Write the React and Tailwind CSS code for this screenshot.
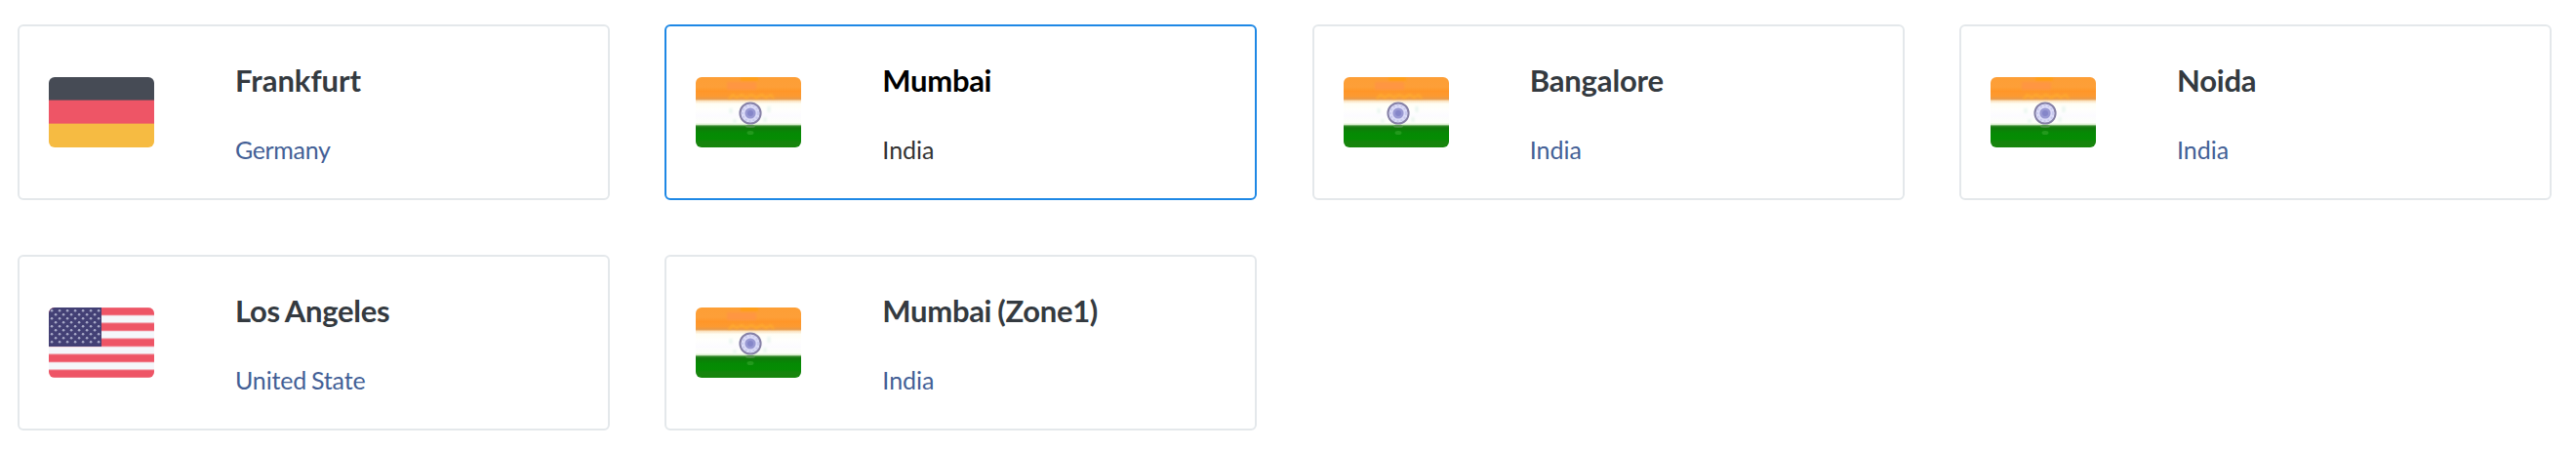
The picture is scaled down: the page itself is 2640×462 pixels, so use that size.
const regions = [
  { city: "Frankfurt", country: "Germany", flag: "de", cityTracking: "tracking-normal", countryTracking: "tracking-[-0.35px]" },
  { city: "Mumbai", country: "India", flag: "in", selected: true, cityTracking: "tracking-[-0.3px]" },
  { city: "Bangalore", country: "India", flag: "in", cityTracking: "tracking-[-0.15px]" },
  { city: "Noida", country: "India", flag: "in", cityTracking: "tracking-[-0.2px]" },
  { city: "Los Angeles", country: "United State", flag: "us", cityTracking: "tracking-[-0.3px]", countryTracking: "tracking-[-0.15px]" },
  { city: "Mumbai (Zone1)", country: "India", flag: "in", cityTracking: "tracking-[-0.3px]" },
];

const flagClass = "block h-[72px] w-[108px] shrink-0 rounded-[6px]";

function GermanyFlag() {
  return (
    <svg viewBox="0 0 108 72" className={flagClass}>
      <rect width="108" height="24" fill="#464b55" />
      <rect y="24" width="108" height="24" fill="#ee5566" />
      <rect y="48" width="108" height="24" fill="#f6bb42" />
      <rect y="23" width="108" height="1" fill="#8b4d5b" />
      <rect y="47" width="108" height="1" fill="#f07b59" />
    </svg>
  );
}

function UsaFlag() {
  const stars = [];
  for (let row = 0; row < 9; row++) {
    const odd = row % 2;
    for (let col = 0; col < 7 - odd; col++) {
      stars.push([3.1 + odd * 4 + col * 8, 3.2 + row * 4]);
    }
  }
  return (
    <svg viewBox="0 0 108 72" className={flagClass}>
      <rect width="108" height="72" fill="#f5f7fb" />
      {[0, 16, 32, 48, 64].map((y) => (
        <g key={y}>
          <rect y={y} width="108" height="8" fill="#ee5566" />
          <rect y={y - 0.6} width="108" height="1" fill="#f0909c" />
          <rect y={y + 7.5} width="108" height="0.8" fill="#f29aa5" />
        </g>
      ))}
      <rect width="54" height="40" fill="#434075" />
      {stars.map(([x, y]) => (
        <circle key={`${x}-${y}`} cx={x} cy={y} r="1.3" fill="#a9aac8" />
      ))}
    </svg>
  );
}

function IndiaFlag({ id }) {
  return (
    <svg viewBox="0 0 108 72" className={flagClass}>
      <defs>
        <linearGradient id={`${id}-bands`} x1="0" y1="0" x2="0" y2="1">
          <stop offset="0" stopColor="#fd9e35" />
          <stop offset="0.14" stopColor="#fd9f38" />
          <stop offset="0.2" stopColor="#ff9628" />
          <stop offset="0.27" stopColor="#fc9a31" />
          <stop offset="0.31" stopColor="#e99a48" />
          <stop offset="0.34" stopColor="#fbe3c0" />
          <stop offset="0.38" stopColor="#fffef4" />
          <stop offset="0.46" stopColor="#fffffc" />
          <stop offset="0.55" stopColor="#fcfbff" />
          <stop offset="0.65" stopColor="#fdfff8" />
          <stop offset="0.675" stopColor="#d7edcb" />
          <stop offset="0.695" stopColor="#358a2c" />
          <stop offset="0.72" stopColor="#107a0a" />
          <stop offset="0.8" stopColor="#058a04" />
          <stop offset="0.88" stopColor="#058c03" />
          <stop offset="0.92" stopColor="#17840e" />
          <stop offset="1" stopColor="#17860c" />
        </linearGradient>
        <filter id={`${id}-soft`} x="-30%" y="-50%" width="160%" height="200%">
          <feGaussianBlur stdDeviation="1.1" />
        </filter>
        <filter id={`${id}-edge`} x="-20%" y="-20%" width="140%" height="140%">
          <feGaussianBlur stdDeviation="0.5" />
        </filter>
      </defs>
      <rect width="108" height="72" fill={`url(#${id}-bands)`} />
      <g filter={`url(#${id}-soft)`}>
        <rect x="46" y="0" width="18" height="4" fill="#ff9f12" />
        <rect x="32" y="5" width="30" height="8" fill="#ff9446" opacity="0.8" />
        <path d="M34 22l4-4 4 3 5-3 5 3 5-3 5 3 6-3 4 3 5-3 3 4" fill="none" stroke="#ffab2e" strokeWidth="2" />
        <path d="M36 32v5M40 43v4M75 30v6M71 41v5" stroke="#e9f6ef" strokeWidth="3" />
      </g>
      <g filter={`url(#${id}-edge)`}>
        <circle cx="56" cy="37" r="10.6" fill="#dcdcf8" stroke="#8681a6" strokeWidth="2" />
        <circle cx="56" cy="37" r="8" fill="none" stroke="#c8c9ef" strokeWidth="2" strokeDasharray="2 2" />
        <circle cx="56" cy="37" r="5.6" fill="#9999d3" />
        <circle cx="56" cy="37" r="3" fill="#8586c9" />
        <ellipse cx="56" cy="50.5" rx="5" ry="1.2" fill="#4f9148" />
        <ellipse cx="56" cy="57" rx="3.5" ry="2" fill="#229a1e" />
      </g>
    </svg>
  );
}

function Flag({ code, id }) {
  if (code === "de") return <GermanyFlag />;
  if (code === "us") return <UsaFlag />;
  return <IndiaFlag id={id} />;
}

function RegionCard({ region, id }) {
  const { city, country, flag, selected, cityTracking = "", countryTracking = "" } = region;
  return (
    <button
      type="button"
      className={`flex h-[180px] items-center rounded-[6px] border-2 bg-white pl-[30px] text-left ${
        selected ? "border-[#1e88e5]" : "border-[#e4e8eb]"
      }`}
    >
      <Flag code={flag} id={id} />
      <span className="mt-[37px] ml-[83px] flex flex-col gap-[38px] self-start">
        <span
          className={`text-[31px] leading-[36px] font-bold [word-spacing:-1.2px] ${cityTracking} ${
            selected ? "text-black" : "text-[#343a40]"
          }`}
        >
          {city}
        </span>
        <span
          className={`text-[25px] leading-[30px] [word-spacing:-1.5px] ${countryTracking} ${
            selected ? "text-[#333333]" : "text-[#435f96]"
          }`}
        >
          {country}
        </span>
      </span>
    </button>
  );
}

export default function App() {
  return (
    <main className="h-[462px] bg-white pt-[25px] pr-[25px] pl-[18px] font-[Lato,sans-serif]">
      <div className="grid grid-cols-4 gap-x-[56.33px] gap-y-[56px]">
        {regions.map((region, i) => (
          <RegionCard key={region.city} region={region} id={`region-${i}`} />
        ))}
      </div>
    </main>
  );
}
